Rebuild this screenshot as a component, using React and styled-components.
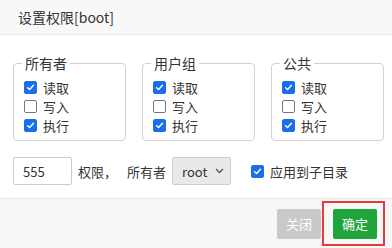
import styled, { createGlobalStyle } from "styled-components";

const GlobalStyle = createGlobalStyle`
  html, body {
    margin: 0;
    padding: 0;
    width: 392px;
    height: 248px;
    overflow: hidden;
    background: #fff;
    font-family: "Noto Sans CJK SC", "Noto Sans", sans-serif;
    color: #333;
  }
`;

const StyledDialog = styled.div`
  width: 392px;
  height: 248px;
  display: flex;
  flex-direction: column;
`;

const StyledHeader = styled.div`
  height: 34px;
  padding: 0 0 0 18px;
  display: flex;
  align-items: center;
  background: #f8f8f8;
  border-bottom: 1px solid #e8e8e8;
  font-size: 14px;
  color: #333;
`;

const StyledBody = styled.div`
  flex: 1;
  padding: 20px 8px 0px 13px;
  display: flex;
  flex-direction: column;
`;

const StyledGroups = styled.div`
  display: flex;
  gap: 16px;
`;

const StyledFieldset = styled.fieldset`
  width: 114px;
  box-sizing: border-box;
  margin: 0;
  border: 1px solid #d2d2d2;
  border-radius: 4px;
  padding: 7px 10px 5px 10px;

  legend {
    font-size: 14px;
    line-height: 16px;
    padding: 0px 3px;
    margin-left: -2px;
    color: #333;
  }
`;

const StyledOption = styled.label`
  display: flex;
  align-items: center;
  height: 19px;
  font-size: 13px;
  color: #333;
  gap: 6px;
  margin: ${(p) => p.$margin || "0px"};
`;

const StyledBox = styled.span`
  width: 13px;
  height: 13px;
  box-sizing: border-box;
  border-radius: 2px;
  border: 1px solid ${(p) => (p.$on ? "#1a6fe8" : "#777")};
  background: ${(p) => (p.$on ? "#1a6fe8" : "#fff")};
  display: flex;
  align-items: center;
  justify-content: center;
  flex-shrink: 0;
`;

const StyledControls = styled.div`
  display: flex;
  align-items: center;
  margin: 16px 0px 0px 0px;
  font-size: 13px;
`;

const StyledInput = styled.div`
  width: 59px;
  height: 28px;
  box-sizing: border-box;
  border: 1px solid #ccc;
  border-radius: 2px;
  padding: 0px 0px 0px 9px;
  display: flex;
  align-items: center;
  font-size: 13px;
  color: #333;
`;

const StyledText = styled.span`
  margin: ${(p) => p.$margin};
  color: #333;
`;

const StyledSelect = styled.div`
  width: 59px;
  height: 28px;
  box-sizing: border-box;
  border: 1px solid #ccc;
  border-radius: 2px;
  background: #e9e9e9;
  padding: 0px 6px 0px 9px;
  display: flex;
  align-items: center;
  justify-content: space-between;
  font-size: 13px;
  color: #333;
`;

const StyledFooter = styled.div`
  height: 49px;
  background: #f6f7f7;
  border-top: 1px solid #e8e8e8;
  display: flex;
  align-items: center;
  justify-content: flex-end;
  padding: 0px 7px 0px 0px;
`;

const StyledButton = styled.div`
  height: 30px;
  padding: 0px 9px;
  border-radius: 2px;
  display: flex;
  align-items: center;
  font-size: 13px;
  color: #fff;
  background: ${(p) => (p.$primary ? "#20a53a" : "#c9c9c9")};
`;

const StyledMark = styled.div`
  border: 2px solid #e8383d;
  padding: 6px 6px 5px 9px;
  margin: 0px 0px 1px 1px;
`;

function Check({ on }) {
  return (
    <StyledBox $on={on}>
      {on && (
        <svg width="9" height="9" viewBox="0 0 10 10">
          <path d="M1.8 5.2 L4 7.3 L8.3 2.6" fill="none" stroke="#fff" strokeWidth="1.6" strokeLinecap="round" strokeLinejoin="round" />
        </svg>
      )}
    </StyledBox>
  );
}

function Group({ title }) {
  return (
    <StyledFieldset>
      <legend>{title}</legend>
      <StyledOption>
        <Check on />
        读取
      </StyledOption>
      <StyledOption>
        <Check on={false} />
        写入
      </StyledOption>
      <StyledOption>
        <Check on />
        执行
      </StyledOption>
    </StyledFieldset>
  );
}

export default function App() {
  return (
    <>
      <GlobalStyle />
      <StyledDialog>
        <StyledHeader>设置权限[boot]</StyledHeader>
        <StyledBody>
          <StyledGroups>
            <Group title="所有者" />
            <Group title="用户组" />
            <Group title="公共" />
          </StyledGroups>
          <StyledControls>
            <StyledInput>555</StyledInput>
            <StyledText $margin="0px 0px 0px 6px">权限，</StyledText>
            <StyledText $margin="0px 6px 0px 10px">所有者</StyledText>
            <StyledSelect>
              root
              <svg width="9" height="6" viewBox="0 0 9 6">
                <path d="M1 1 L4.5 4.5 L8 1" fill="none" stroke="#555" strokeWidth="1.3" />
              </svg>
            </StyledSelect>
            <StyledOption $margin="0px 0px 0px 20px">
              <Check on />
              应用到子目录
            </StyledOption>
          </StyledControls>
        </StyledBody>
        <StyledFooter>
          <StyledButton>关闭</StyledButton>
          <StyledMark>
            <StyledButton $primary>确定</StyledButton>
          </StyledMark>
        </StyledFooter>
      </StyledDialog>
    </>
  );
}
